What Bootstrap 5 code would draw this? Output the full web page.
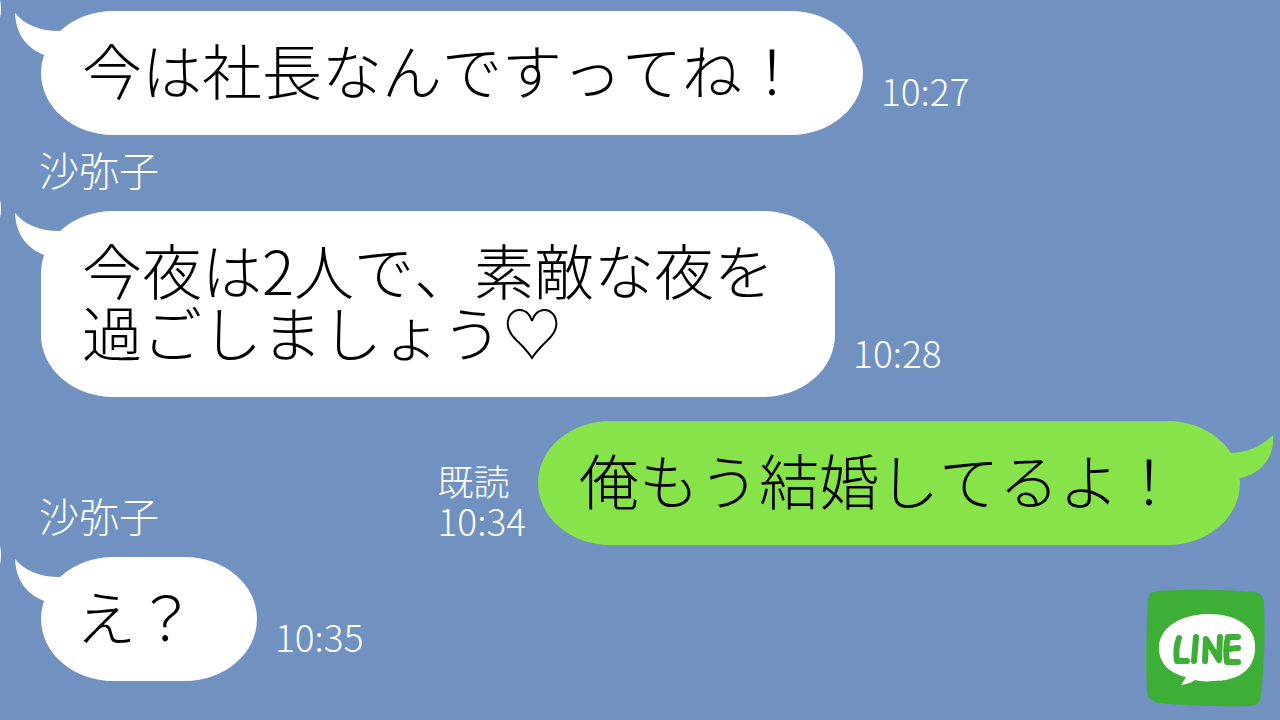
<!DOCTYPE html>
<html lang="ja">
<head>
<meta charset="utf-8">
<meta name="viewport" content="width=device-width, initial-scale=1">
<title>トーク</title>
<link href="https://cdn.jsdelivr.net/npm/bootstrap@5.3.0/dist/css/bootstrap.min.css" rel="stylesheet">
<style>
  body { background: #7191c0; font-family: "Noto Sans CJK JP", sans-serif; font-weight: 300; font-kerning: none; color: #000; }
  .talk { min-height: 100vh; padding: 11px 40px 0 39px; }
  .bubble { position: relative; background: #fff; border-radius: 72px / 62px; padding: 27px 61px 35px 41px; font-size: 60px; line-height: 62px; }
  .bubble.theirs { margin-left: 2px; }
  .bubble.mine { background: #86e34a; }
  .bubble.brief { padding-left: 35px; }
  .tail { position: absolute; top: 0; width: 56px; height: 48px; fill: #fff; }
  .theirs .tail { left: -26px; }
  .mine .tail { right: -34px; top: 12px; fill: #86e34a; }
  .avatar { position: absolute; left: -130px; top: -47px; width: 90px; height: 90px; border-radius: 50%; background: #fff; }
  .sender { color: #fff; font-size: 40px; line-height: 40px; }
  .sender-first { margin: 14px 0 22px; }
  .sender-inline { margin-bottom: 10px; }
  .stamp { color: #fff; font-size: 37px; line-height: 40px; }
  .received { gap: 18px; }
  .received .stamp { margin-bottom: 25px; }
  .sent { gap: 12px; }
  .sent .stamp { margin-bottom: 5px; }
  .read-mark { font-size: 36px; }
  .next-reply { margin-top: 12px; }
  .line-logo { position: fixed; right: 13px; bottom: 12px; width: 122px; height: 120px; }
</style>
</head>
<body>
<main class="talk d-flex flex-column overflow-hidden position-relative">
  <div class="received d-flex align-items-end">
    <div class="bubble theirs"><span class="avatar"></span>
      <svg class="tail" viewBox="0 0 56 48" aria-hidden="true"><path d="M0 2C10 14 25 20 45 20L50 45L29 44C12 37 1 24 0 2Z"/></svg>今は社長なんですってね！</div>
    <time class="stamp">10:27</time>
  </div>
  <div class="sender sender-first">沙弥子</div>
  <div class="received d-flex align-items-end">
    <div class="bubble theirs"><span class="avatar"></span>
      <svg class="tail" viewBox="0 0 56 48" aria-hidden="true"><path d="M0 2C10 14 25 20 45 20L50 45L29 44C12 37 1 24 0 2Z"/></svg>今夜は2人で、素敵な夜を<br>過ごしましょう♡</div>
    <time class="stamp">10:28</time>
  </div>
  <div class="d-flex justify-content-between align-items-end mt-4">
    <div class="sender sender-inline">沙弥子</div>
    <div class="sent d-flex align-items-end">
      <div class="stamp"><div class="read-mark">既読</div><time>10:34</time></div>
      <div class="bubble mine"><svg class="tail" viewBox="0 0 56 48" aria-hidden="true"><path d="M55 2C44 13 29 20 10 20L8 45L22 45C40 42 57 27 55 2Z"/></svg>俺もう結婚してるよ！</div>
    </div>
  </div>
  <div class="received next-reply d-flex align-items-end">
    <div class="bubble theirs brief"><span class="avatar"></span>
      <svg class="tail" viewBox="0 0 56 48" aria-hidden="true"><path d="M0 2C10 14 25 20 45 20L50 45L29 44C12 37 1 24 0 2Z"/></svg>え？</div>
    <time class="stamp">10:35</time>
  </div>
</main>
<svg class="line-logo" viewBox="0 0 122 120" role="img" aria-label="LINE">
  <path fill="#3dae36" d="M12 3Q60 0 110 4Q119 6 119 16Q121 60 116 108Q115 118 104 118Q58 119 14 115Q3 113 2 104Q0 60 3 12Q3 4 12 3Z"/>
  <path fill="#fff" d="M62 26C88 25 110 37 110 57C111 80 96 93 67 93C60 94 54 93 50 92C46 95 42 96 36 97L41 89C24 85 14 75 14 60C14 40 34 27 62 26Z"/>
  <g fill="none" stroke="#3dae36" stroke-width="6" stroke-linecap="round" stroke-linejoin="round"><path d="M34 50Q30 61 32 73L42 73M51 49L49 73M60 73L61 51L74 72L75 49M93 49L83 49Q80 61 82 74L93 74M83 61L93 60"/></g>
</svg>
<script src="https://cdn.jsdelivr.net/npm/bootstrap@5.3.0/dist/js/bootstrap.bundle.min.js"></script>
</body>
</html>
